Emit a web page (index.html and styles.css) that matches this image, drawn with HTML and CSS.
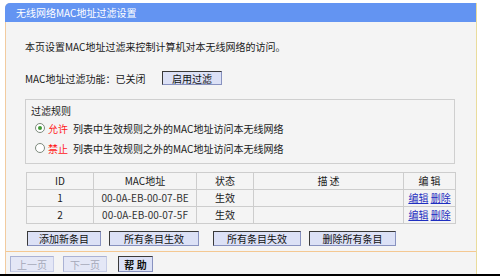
FILE: index.html
```html
<!DOCTYPE html>
<html lang="zh-CN">
<head>
<meta charset="utf-8">
<title>无线网络MAC地址过滤设置</title>
<link rel="stylesheet" href="styles.css">
</head>
<body>
<div class="page">
  <div class="panel">
    <div class="title">无线网络MAC地址过滤设置</div>
    <div class="content">
      <p class="intro">本页设置MAC地址过滤来控制计算机对本无线网络的访问。</p>
      <div class="status-row">
        <span class="status-label">MAC地址过滤功能：已关闭</span>
        <span class="btn btn-enable">启用过滤</span>
      </div>
      <div class="rules">
        <div class="rules-title">过滤规则</div>
        <div class="radio-row"><span class="radio checked"></span><span class="red">允许</span><span class="rule-text">列表中生效规则之外的MAC地址访问本无线网络</span></div>
        <div class="radio-row"><span class="radio"></span><span class="red">禁止</span><span class="rule-text">列表中生效规则之外的MAC地址访问本无线网络</span></div>
      </div>
      <table class="list">
        <colgroup>
          <col class="c-id"><col class="c-mac"><col class="c-state"><col class="c-desc"><col class="c-edit">
        </colgroup>
        <tr><th>ID</th><th>MAC地址</th><th>状态</th><th>描 述</th><th>编 辑</th></tr>
        <tr><td>1</td><td>00-0A-EB-00-07-BE</td><td>生效</td><td></td><td><a class="link">编辑</a> <a class="link">删除</a></td></tr>
        <tr><td>2</td><td>00-0A-EB-00-07-5F</td><td>生效</td><td></td><td><a class="link">编辑</a> <a class="link">删除</a></td></tr>
      </table>
      <div class="actions">
        <span class="btn btn-add">添加新条目</span>
        <span class="btn btn-on">所有条目生效</span>
        <span class="btn btn-off">所有条目失效</span>
        <span class="btn btn-del">删除所有条目</span>
      </div>
    </div>
    <div class="footer">
      <span class="btn btn-nav disabled">上一页</span>
      <span class="btn btn-nav disabled">下一页</span>
      <span class="btn btn-help">帮 助</span>
    </div>
  </div>
  <div class="bottom-line"></div>
</div>
</body>
</html>
```

FILE: styles.css
```css
html, body {
  margin: 0;
  padding: 0;
  background: #ffffff;
}
body {
  font-family: "Noto Sans CJK SC", "Liberation Sans", sans-serif;
  font-size: 10px;
  color: #1a1a1a;
}
.page {
  width: 500px;
  height: 277px;
  padding-top: 3px;
  box-sizing: border-box;
  display: flex;
  flex-direction: column;
}
.panel {
  margin-left: 5px;
  width: 472px;
  box-sizing: border-box;
  border-left: 1px solid #f2cb9f;
  border-right: 1px solid #eadc9c;
  border-top-left-radius: 5px;
  background: #f4f4f4;
  height: 271px;
  display: flex;
  flex-direction: column;
}
.title {
  height: 19px;
  line-height: 19px;
  background: #6394f2;
  color: #ffffff;
  border-top-left-radius: 5px;
  margin-left: -1px;
  padding-left: 11px;
}
.content {
  padding: 18px 0 4px 19px;
  flex: 1;
}
.intro {
  margin: 0;
  line-height: 14px;
}
.status-row {
  margin-top: 17px;
  display: flex;
  align-items: center;
  height: 14px;
}
.status-label {
  width: 137px;
}
.btn {
  display: inline-flex;
  align-items: center;
  justify-content: center;
  box-sizing: border-box;
  height: 15px;
  background: #dce1f6;
  border: 1px solid;
  border-color: #3a3a3a #8892c0 #8892c0 #3a3a3a;
  color: #111;
  line-height: 13px;
  white-space: nowrap;
}
.btn-enable {
  width: 60px;
  height: 14px;
}
.rules {
  margin-top: 14px;
  width: 430px;
  box-sizing: border-box;
  border: 1px solid #cfcfcf;
  padding: 4px 5px 5px 5px;
}
.rules-title {
  line-height: 14px;
}
.radio-row {
  height: 20px;
  display: flex;
  align-items: center;
  padding-left: 4px;
}
.radio {
  width: 10px;
  height: 10px;
  box-sizing: border-box;
  border-radius: 50%;
  border: 1px solid #7d8a7d;
  background: #ffffff;
  margin-right: 3px;
  display: flex;
  align-items: center;
  justify-content: center;
}
.radio.checked::after {
  content: "";
  width: 4px;
  height: 4px;
  border-radius: 50%;
  background: #3f9a35;
}
.red {
  color: #ff1a1a;
  margin-right: 5px;
}
.list {
  margin-top: 8px;
  margin-left: 1px;
  width: 429px;
  border-collapse: collapse;
  table-layout: fixed;
}
.c-id { width: 67px; }
.c-mac { width: 103px; }
.c-state { width: 57px; }
.c-desc { width: 150px; }
.c-edit { width: 52px; }
.list th, .list td {
  border: 1px solid #cdcdcd;
  height: 16px;
  padding: 0;
  line-height: 16px;
  text-align: center;
  font-weight: normal;
  color: #1a1a1a;
}
.list td:nth-child(2) {
  color: #333;
}
.link {
  color: #1f2fc0;
  text-decoration: underline;
}
.actions {
  margin-top: 7px;
  margin-left: 2px;
  display: flex;
  gap: 8px;
}
.btn-add { width: 74px; }
.btn-on { width: 90px; }
.btn-off { width: 88px; margin-left: 6px; }
.btn-del { width: 87px; }
.footer {
  border-top: 1px solid #f4c892;
  height: 23px;
  box-sizing: border-box;
  padding: 4px 0 0 4px;
  display: flex;
  gap: 9px;
  align-items: flex-start;
}
.btn-nav {
  width: 44px;
  height: 16px;
}
.btn.disabled {
  color: #a4a8b8;
  background: #e4e7f6;
  border-color: #aab2d4 #c6cce6 #c6cce6 #aab2d4;
}
.btn-help {
  width: 35px;
  height: 16px;
  margin-left: 2px;
  font-weight: bold;
}
.bottom-line {
  height: 2px;
  background: #000000;
}
```
